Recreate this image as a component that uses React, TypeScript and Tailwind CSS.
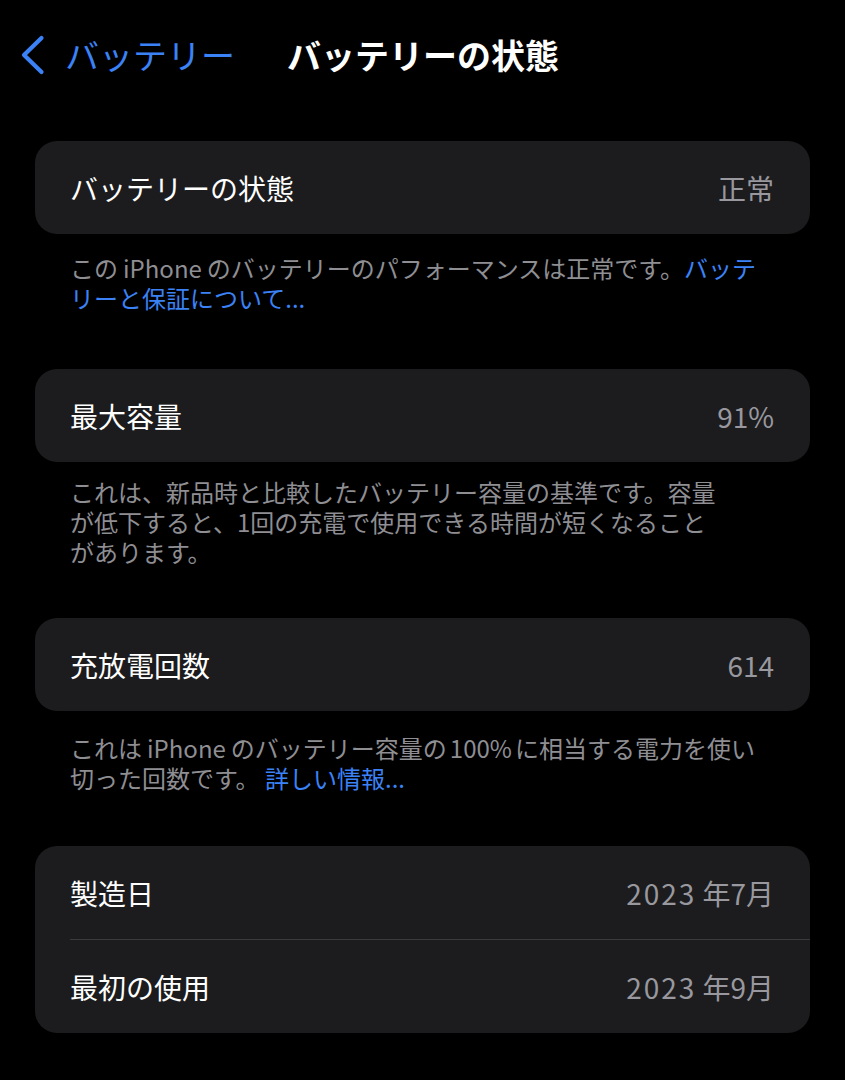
import React from "react";

const font = {
  fontFamily: '"Noto Sans CJK JP", "Noto Sans", sans-serif',
};

function Row({ label, value }: { label: string; value: React.ReactNode }) {
  return (
    <div className="flex h-[93px] items-center justify-between pl-[35px] pr-[36px]">
      <span className="text-[28px] leading-none text-white">{label}</span>
      <span className="text-[28px] leading-none text-[#98989e]">{value}</span>
    </div>
  );
}

function Card({ children }: { children: React.ReactNode }) {
  return <div className="overflow-hidden rounded-[22px] bg-[#1c1c1e]">{children}</div>;
}

function Note({ children, top }: { children: React.ReactNode; top: string }) {
  return (
    <p className={`px-[35px] text-[24px] leading-[30px] text-[#8e8e93] ${top}`}>
      {children}
    </p>
  );
}

const Link = ({ children }: { children: React.ReactNode }) => (
  <span className="text-[#3b82f6]">{children}</span>
);

// Latin words set inside Japanese text get a little breathing room
const Latin = ({ children }: { children: React.ReactNode }) => (
  <span className="mx-[5px]">{children}</span>
);

const Year = ({ y, m }: { y: string; m: string }) => (
  <>
    <span className="mr-[6px] tracking-[2px]">{y}</span>年{m}月
  </>
);

export default function App() {
  return (
    <div className="min-h-[1080px] w-[845px] bg-black" style={font}>
      {/* navigation bar */}
      <div className="flex h-[108px] items-center pt-[1px]">
        <div className="flex items-center pl-[19px]">
          <svg width="26" height="40" viewBox="0 0 26 40" fill="none">
            <path
              d="M22.5 3 L5 20 L22.5 37"
              stroke="#3b82f6"
              strokeWidth="4.2"
              strokeLinecap="round"
              strokeLinejoin="round"
            />
          </svg>
          <span className="ml-[20px] text-[34px] leading-none text-[#3b82f6]">バッテリー</span>
        </div>
        <h1 className="ml-[52px] text-[34px] font-bold leading-none text-white">
          バッテリーの状態
        </h1>
      </div>

      <div className="px-[35px] pt-[33px]">
        <Card>
          <Row label="バッテリーの状態" value="正常" />
        </Card>
        <Note top="pt-[19px]">
          この<Latin>iPhone</Latin>のバッテリーのパフォーマンスは正常です。<Link>バッテ</Link>
          <br />
          <Link>リーと保証について...</Link>
        </Note>

        <div className="mt-[56px]">
          <Card>
            <Row label="最大容量" value="91%" />
          </Card>
        </div>
        <Note top="pt-[15px]">
          これは、新品時と比較したバッテリー容量の基準です。容量
          <br />
          が低下すると、1回の充電で使用できる時間が短くなること
          <br />
          があります。
        </Note>

        <div className="mt-[51px]">
          <Card>
            <Row label="充放電回数" value="614" />
          </Card>
        </div>
        <Note top="pt-[22px]">
          これは<Latin>iPhone</Latin>のバッテリー容量の<span className="mx-[3px]">100%</span>
          に相当する電力を使い
          <br />
          切った回数です。 <Link>詳しい情報...</Link>
        </Note>

        <div className="mt-[53px]">
          <Card>
            <Row label="製造日" value={<Year y="2023" m="7" />} />
            <div className="ml-[35px] h-px bg-[#3a3a3c]" />
            <Row label="最初の使用" value={<Year y="2023" m="9" />} />
          </Card>
        </div>
      </div>
    </div>
  );
}
